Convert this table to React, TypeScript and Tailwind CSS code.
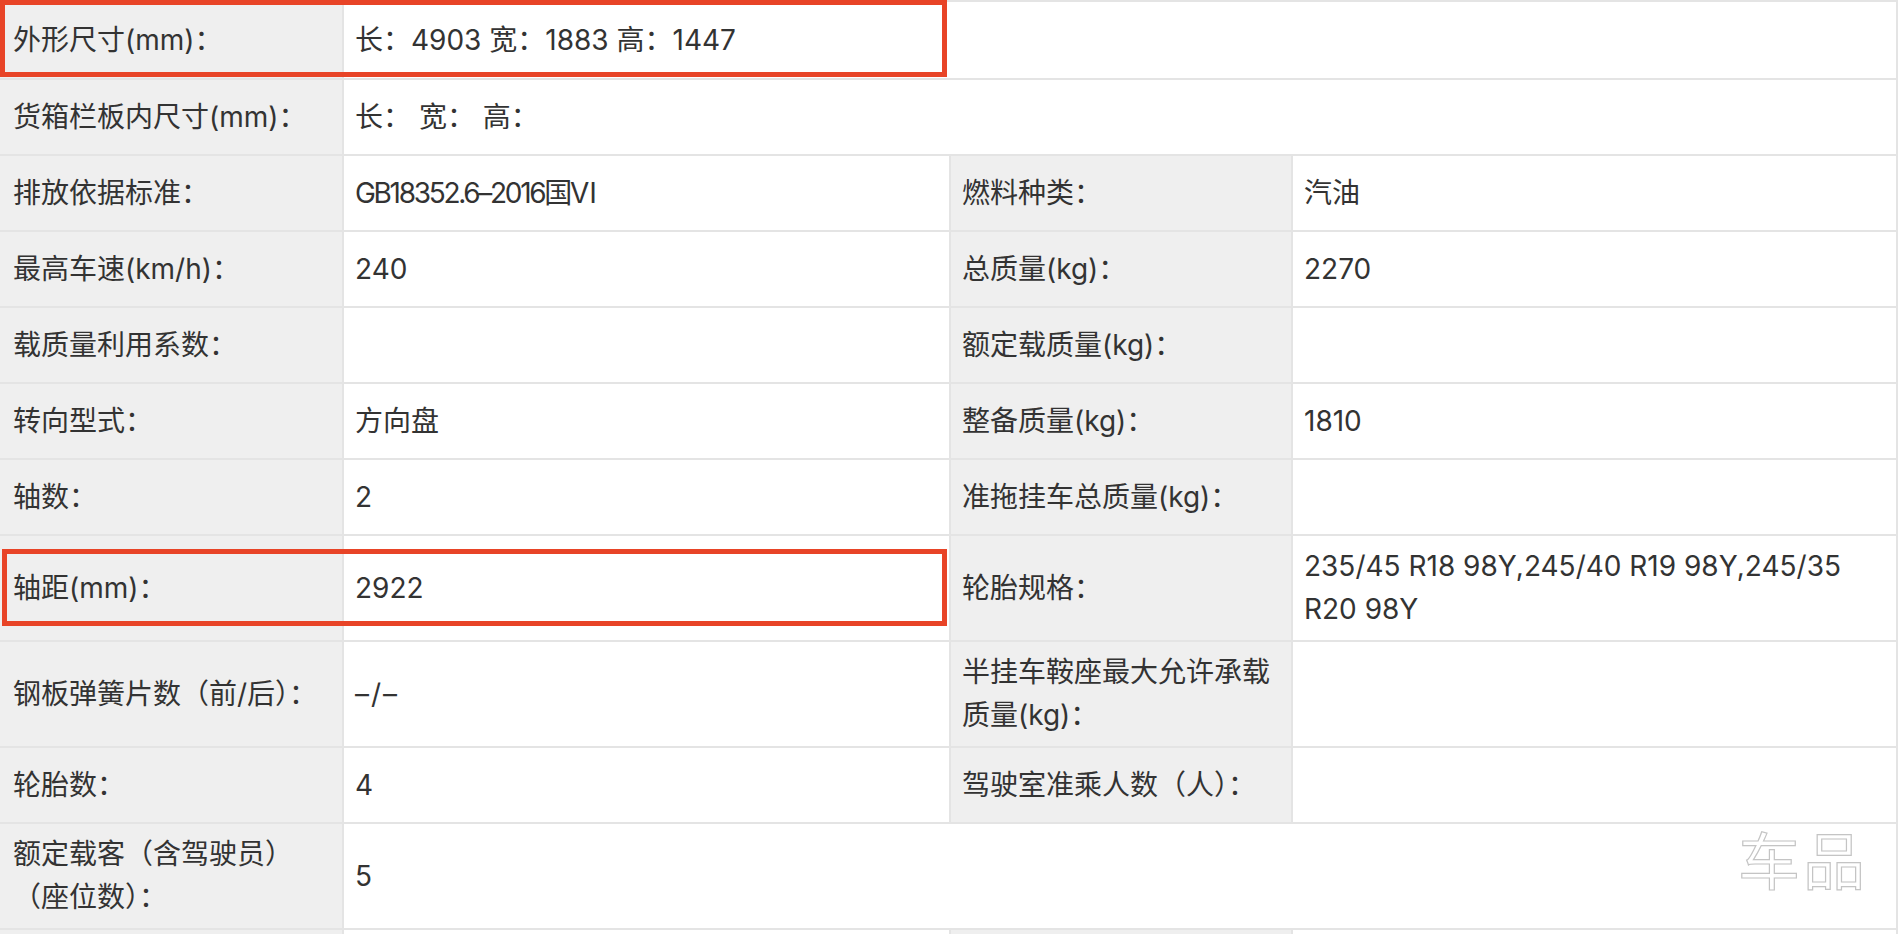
import React from 'react';

type Cell = { text?: React.ReactNode; label?: boolean; span?: boolean };

const rows: Cell[][] = [
  [{ text: '外形尺寸(mm)：', label: true }, { text: '长：4903 宽：1883 高：1447', span: true }],
  [{ text: '货箱栏板内尺寸(mm)：', label: true }, { text: '长： 宽： 高：', span: true }],
  [
    { text: '排放依据标准：', label: true },
    { text: <span className="tracking-[-2.3px]">GB18352.6–2016国Ⅵ</span> },
    { text: '燃料种类：', label: true },
    { text: '汽油' },
  ],
  [
    { text: '最高车速(km/h)：', label: true },
    { text: '240' },
    { text: '总质量(kg)：', label: true },
    { text: '2270' },
  ],
  [
    { text: '载质量利用系数：', label: true },
    { text: '' },
    { text: '额定载质量(kg)：', label: true },
    { text: '' },
  ],
  [
    { text: '转向型式：', label: true },
    { text: '方向盘' },
    { text: '整备质量(kg)：', label: true },
    { text: '1810' },
  ],
  [
    { text: '轴数：', label: true },
    { text: '2' },
    { text: '准拖挂车总质量(kg)：', label: true },
    { text: '' },
  ],
  [
    { text: '轴距(mm)：', label: true },
    { text: '2922' },
    { text: '轮胎规格：', label: true },
    {
      text: (
        <>
          235/45 R18 98Y,245/40 R19 98Y,245/35
          <br />
          R20 98Y
        </>
      ),
    },
  ],
  [
    { text: '钢板弹簧片数（前/后）：', label: true },
    { text: <span className="tracking-[2px]">–/–</span> },
    {
      text: (
        <>
          半挂车鞍座最大允许承载
          <br />
          质量(kg)：
        </>
      ),
      label: true,
    },
    { text: '' },
  ],
  [
    { text: '轮胎数：', label: true },
    { text: '4' },
    { text: '驾驶室准乘人数（人）：', label: true },
    { text: '' },
  ],
  [
    {
      text: (
        <>
          额定载客（含驾驶员）
          <br />
          （座位数）：
        </>
      ),
      label: true,
    },
    { text: '5', span: true },
  ],
  [{ text: '', label: true }, { text: '' }, { text: '', label: true }, { text: '' }],
];

export default function App() {
  return (
    <div
      className="relative min-h-screen bg-white text-[28px] text-[#333] overflow-hidden"
      style={{ fontFamily: 'Inter, "Noto Sans CJK SC", sans-serif' }}
    >
      <div className="w-[1898px] grid grid-cols-[342px_605px_340px_603px] gap-[2px] bg-[#e4e4e4] pt-[2px] pr-[2px]">
        {rows.map((row, ri) =>
          row.map((c, ci) => (
            <div
              key={`${ri}-${ci}`}
              className={
                'flex items-center py-[9px] leading-[43px] ' +
                (ri === 0 ? 'min-h-[76px] ' : 'min-h-[74px] ') +
                (ci === 0 ? 'pl-[13px] pr-[8px] ' : 'pl-[11px] pr-[8px] ') +
                (c.label ? 'bg-[#efefef] ' : 'bg-white ') +
                (c.span ? 'col-span-3' : '')
              }
            >
              <span>{c.text}</span>
            </div>
          ))
        )}
      </div>

      {/* highlight annotations */}
      <div className="absolute left-0 top-0 w-[947px] h-[77px] border-[5px] border-[#e84427] pointer-events-none" />
      <div className="absolute left-[2px] top-[549px] w-[945px] h-[77px] border-[5px] border-[#e84427] pointer-events-none" />

      {/* watermark */}
      <div
        className="absolute left-[1738px] top-[827px] text-[62px] leading-none tracking-[3px] text-transparent [-webkit-text-stroke:1.2px_#c4c4c4] pointer-events-none"
        style={{ fontFamily: '"Noto Sans CJK SC", sans-serif' }}
      >
        车品
      </div>
    </div>
  );
}
